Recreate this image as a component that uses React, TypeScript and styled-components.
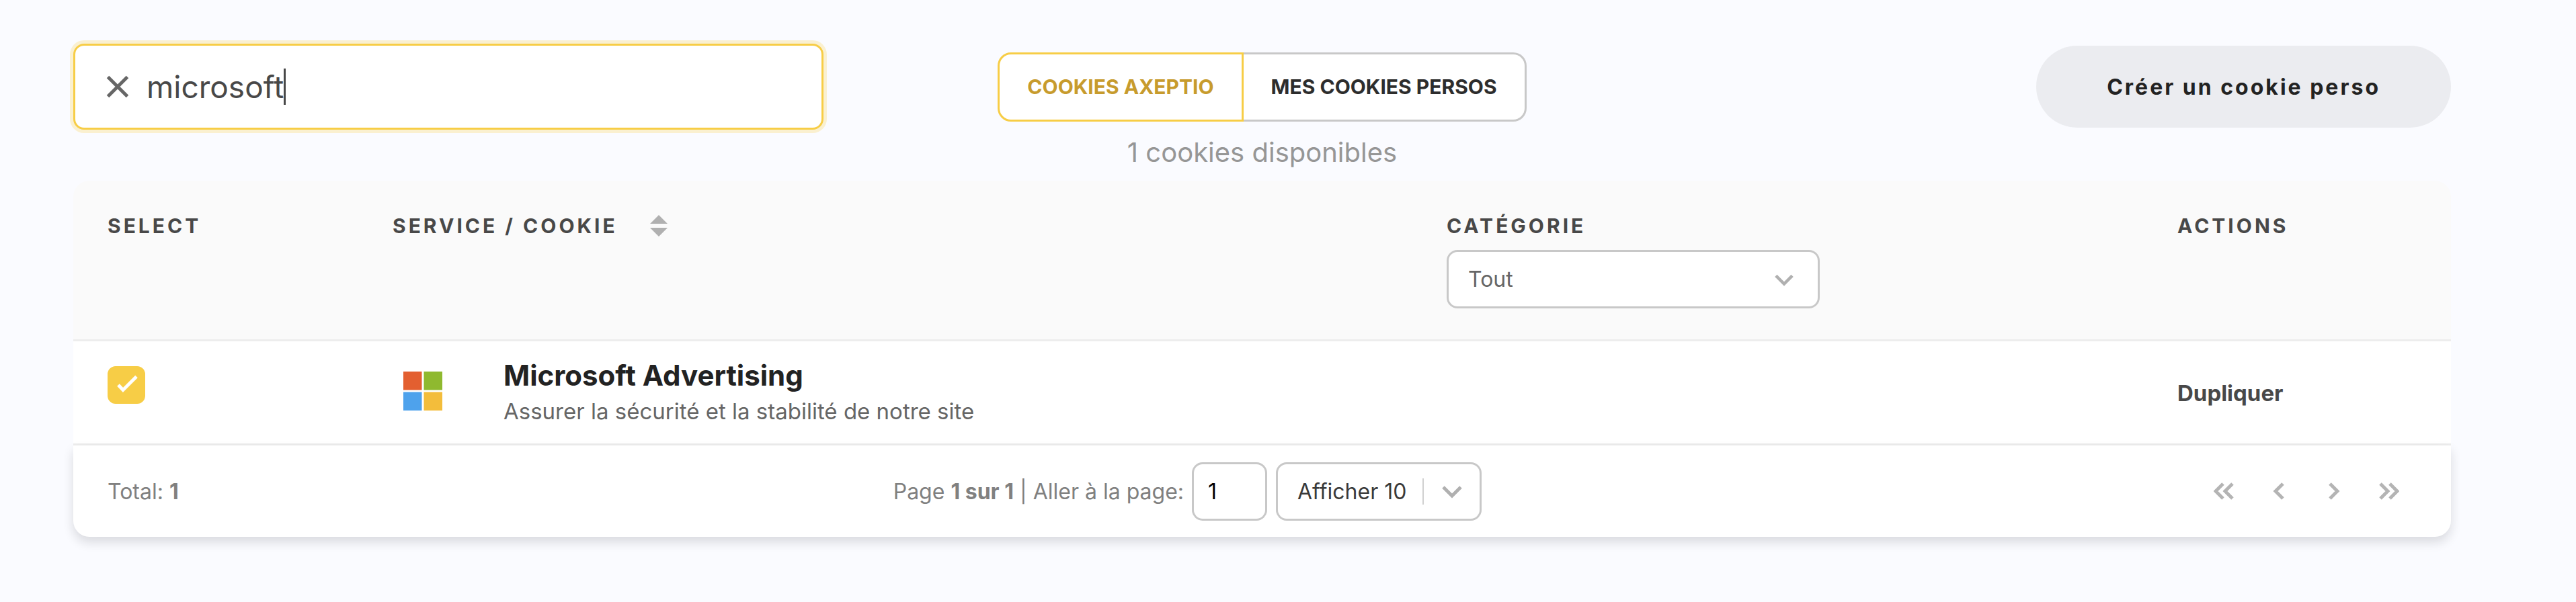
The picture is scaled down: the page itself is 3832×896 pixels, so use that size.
import React, { useState } from "react";
import styled, { createGlobalStyle, css } from "styled-components";

const color = {
  page: "#fafbff",
  yellow: "#f7cd46",
  amber: "#c79b2d",
  border: "#c8c8c8",
  line: "#ededed",
  icon: "#b0b0b0",
  ink: "#222222",
  heading: "#484848",
  body: "#666666",
  muted: "#808080",
};

const GlobalStyle = createGlobalStyle`
  *, *::before, *::after { box-sizing: border-box; }
  body {
    margin: 0;
    background: ${color.page};
    font-family: Inter, "Liberation Sans", sans-serif;
    color: ${color.ink};
  }
  button, input, select { font: inherit; color: inherit; margin: 0; }
  svg { display: block; flex: none; }
`;

const Page = styled.main`
  padding: 65px 186px 97px 109px;
`;

const Toolbar = styled.header`
  display: grid;
  grid-template-columns: 1fr auto 1fr;
  grid-template-rows: 128px auto;
  row-gap: 8px;
  align-items: center;
  margin-bottom: 16px;
`;

const SearchBox = styled.div`
  display: flex;
  align-items: center;
  width: 100%;
  max-width: 1116px;
  height: 128px;
  padding: 0 46px;
  background: #fff;
  border: 3px solid ${color.yellow};
  border-radius: 16px;
  box-shadow: 0 0 0 5px #faf0d0;
`;

const IconButton = styled.button`
  display: flex;
  align-items: center;
  justify-content: center;
  padding: 0;
  border: 0;
  background: none;
  cursor: pointer;
`;

const ClearButton = styled(IconButton)`
  margin-right: 26px;
`;

const SearchInput = styled.input`
  field-sizing: content;
  padding: 0;
  border: 0;
  outline: 0;
  background: none;
  font-size: 46px;
  line-height: 56px;
  color: ${color.heading};
  caret-color: transparent;
`;

const Caret = styled.span`
  width: 3px;
  height: 54px;
  background: ${color.heading};
`;

const Segments = styled.div`
  grid-column: 2;
  display: flex;
`;

const Segment = styled.button<{ $active: boolean }>`
  height: 103px;
  padding: 0 41px;
  background: #fff;
  border: 3px solid ${({ $active }) => ($active ? color.yellow : color.border)};
  color: ${({ $active }) => ($active ? color.amber : "#2d2d2d")};
  font-size: 30px;
  font-weight: 700;
  white-space: nowrap;
  cursor: pointer;

  &:first-child {
    border-radius: 20px 0 0 20px;
  }
  &:last-child {
    border-left: 0;
    border-radius: 0 20px 20px 0;
  }
`;

const Count = styled.p`
  grid-column: 2;
  margin: 0;
  text-align: center;
  font-size: 40px;
  line-height: 52px;
  color: #969696;
`;

const CreateButton = styled.button`
  justify-self: end;
  height: 122px;
  padding: 0 105px;
  border: 0;
  border-radius: 61px;
  background: #ebecf0;
  font-size: 32px;
  font-weight: 700;
  letter-spacing: 3px;
  white-space: nowrap;
  cursor: pointer;
`;

const Table = styled.table`
  width: 100%;
  table-layout: fixed;
  border-collapse: separate;
  border-spacing: 0;
`;

const Col = styled.col<{ $width?: number }>`
  ${({ $width }) => $width && css`width: ${$width}px;`}
`;

const HeadCell = styled.th`
  padding: 47px 51px 46px;
  background: #fafafa;
  border-bottom: 3px solid ${color.line};
  text-align: left;
  vertical-align: top;
  font-size: 30px;
  line-height: 40px;
  font-weight: 700;
  letter-spacing: 4px;
  color: ${color.heading};

  &:first-child { border-top-left-radius: 24px; }
  &:last-child { border-top-right-radius: 24px; }
`;

const SortLabel = styled.span`
  display: flex;
  align-items: center;
  gap: 48px;
`;

const Cell = styled.td<{ $top?: boolean }>`
  padding: ${({ $top }) => ($top ? "37px" : "24px")} 51px 22px;
  background: #fff;
  border-bottom: 3px solid ${color.line};
  vertical-align: ${({ $top }) => ($top ? "top" : "middle")};
`;

const SelectWrap = styled.div<{ $width: number }>`
  position: relative;
  width: ${({ $width }) => $width}px;
`;

const SelectBox = styled.select<{ $tone: string }>`
  appearance: none;
  display: block;
  width: 100%;
  height: 87px;
  padding: 0 29px;
  background: #fff;
  border: 3px solid ${color.border};
  border-radius: 16px;
  font-size: 32px;
  font-weight: 400;
  letter-spacing: normal;
  color: ${({ $tone }) => $tone};
`;

const SelectMark = styled.span<{ $right: number }>`
  position: absolute;
  top: 0;
  bottom: 0;
  right: ${({ $right }) => $right}px;
  display: flex;
  align-items: center;
  gap: 27px;
  pointer-events: none;
`;

const Divider = styled.span`
  width: 2px;
  height: 39px;
  background: #d0d0d0;
`;

const CategoryFilter = styled.div`
  margin-top: 16px;
`;

const CheckLabel = styled.label`
  display: grid;
  width: 56px;
  height: 56px;

  > * { grid-area: 1 / 1; }
  svg { pointer-events: none; }
`;

const CheckInput = styled.input`
  appearance: none;
  width: 56px;
  height: 56px;
  border: 3px solid ${color.border};
  border-radius: 12px;
  background: #fff;

  &:checked {
    border-color: ${color.yellow};
    background: ${color.yellow};
  }
`;

const Service = styled.div`
  display: flex;
`;

const ServiceLogo = styled.div`
  display: flex;
  align-items: center;
  width: 165px;
  height: 100px;
  padding-left: 16px;
`;

const ServiceName = styled.div`
  font-size: 42px;
  line-height: 54px;
  font-weight: 700;
`;

const ServiceText = styled.div`
  font-size: 33px;
  line-height: 52px;
  color: ${color.body};
`;

const DuplicateButton = styled.button`
  padding: 0;
  border: 0;
  background: none;
  font-size: 33px;
  font-weight: 700;
  color: ${color.heading};
  cursor: pointer;
`;

const Footer = styled.footer`
  display: flex;
  align-items: center;
  justify-content: space-between;
  height: 136px;
  padding: 0 51px;
  background: #fff;
  border-radius: 0 0 24px 24px;
  box-shadow: 0 8px 16px rgba(20, 20, 30, 0.14);
  font-size: 32px;
  color: ${color.muted};
  white-space: nowrap;
`;

const Paging = styled.div`
  display: flex;
  align-items: center;
`;

const PageInput = styled.input`
  width: 112px;
  height: 87px;
  margin: 0 13px 0 12px;
  padding: 0 21px;
  background: #fff;
  border: 3px solid ${color.border};
  border-radius: 16px;
  color: #000;
`;

const Pager = styled.nav`
  display: flex;
`;

const PagerButton = styled(IconButton)`
  width: 82px;
  height: 64px;
`;

const CloseIcon = () => (
  <svg width="34" height="34" viewBox="0 0 34 34" fill="none" stroke="#666" strokeWidth="5">
    <path d="M2.5 2.5 31.5 31.5M31.5 2.5 2.5 31.5" />
  </svg>
);

const SortIcon = () => (
  <svg width="26" height="32" viewBox="0 0 26 32" fill={color.icon}>
    <path d="M13 0 26 13H0zM13 32 26 19H0z" />
  </svg>
);

const ChevronDown = ({ width = 30 }: { width?: number }) => (
  <svg width={width} height={width} viewBox="0 0 30 30" fill="none" stroke={color.icon} strokeWidth="5">
    <path d="M2 9 15 22 28 9" />
  </svg>
);

const CheckIcon = () => (
  <svg width="56" height="56" viewBox="0 0 56 56" fill="none" stroke="#fff" strokeWidth="5">
    <path d="M16 28 23 35.500 43 15.500" />
  </svg>
);

const MicrosoftLogo = () => (
  <svg width="58" height="58" viewBox="0 0 58 58" role="img" aria-label="Microsoft">
    <path fill="#e35f30" d="M0 0h27.500v27.500H0z" />
    <path fill="#8fb92f" d="M30.500 0H58v27.500H30.500z" />
    <path fill="#4ea2ec" d="M0 30.500h27.500V58H0z" />
    <path fill="#f3bd3b" d="M30.500 30.500H58V58H30.500z" />
  </svg>
);

const arrows = {
  first: "M14 2 3 13 14 24M28 2 17 13 28 24",
  previous: "M21 2 10 13 21 24",
  next: "M9 2 20 13 9 24",
  last: "M2 2 13 13 2 24M16 2 27 13 16 24",
};

const Arrow = ({ kind }: { kind: keyof typeof arrows }) => (
  <svg width="30" height="26" viewBox="0 0 30 26" fill="none" stroke="#b4b4b4" strokeWidth="5">
    <path d={arrows[kind]} />
  </svg>
);

export default function App() {
  const [query, setQuery] = useState("microsoft");
  const [tab, setTab] = useState("axeptio");
  const [selected, setSelected] = useState(true);
  const [page, setPage] = useState("1");

  return (
    <>
      <GlobalStyle />
      <Page>
        <Toolbar>
          <SearchBox>
            <ClearButton type="button" aria-label="Effacer" onClick={() => setQuery("")}>
              <CloseIcon />
            </ClearButton>
            <SearchInput
              aria-label="Rechercher un cookie"
              value={query}
              onChange={(e) => setQuery(e.target.value)}
            />
            <Caret />
          </SearchBox>
          <Segments>
            <Segment
              type="button"
              $active={tab === "axeptio"}
              aria-pressed={tab === "axeptio"}
              onClick={() => setTab("axeptio")}
            >
              COOKIES AXEPTIO
            </Segment>
            <Segment
              type="button"
              $active={tab === "persos"}
              aria-pressed={tab === "persos"}
              onClick={() => setTab("persos")}
            >
              MES COOKIES PERSOS
            </Segment>
          </Segments>
          <CreateButton type="button">Créer un cookie perso</CreateButton>
          <Count>1 cookies disponibles</Count>
        </Toolbar>

        <Table>
          <colgroup>
            <Col $width={424} />
            <Col />
            <Col $width={1087} />
            <Col $width={458} />
          </colgroup>
          <thead>
            <tr>
              <HeadCell scope="col">SELECT</HeadCell>
              <HeadCell scope="col">
                <SortLabel>
                  SERVICE / COOKIE
                  <IconButton type="button" aria-label="Trier">
                    <SortIcon />
                  </IconButton>
                </SortLabel>
              </HeadCell>
              <HeadCell scope="col">
                <label htmlFor="category">CATÉGORIE</label>
                <CategoryFilter>
                  <SelectWrap $width={555}>
                    <SelectBox id="category" $tone={color.body}>
                      <option>Tout</option>
                    </SelectBox>
                    <SelectMark $right={39}>
                      <ChevronDown width={28} />
                    </SelectMark>
                  </SelectWrap>
                </CategoryFilter>
              </HeadCell>
              <HeadCell scope="col">ACTIONS</HeadCell>
            </tr>
          </thead>
          <tbody>
            <tr>
              <Cell $top>
                <CheckLabel>
                  <CheckInput
                    type="checkbox"
                    aria-label="Microsoft Advertising"
                    checked={selected}
                    onChange={(e) => setSelected(e.target.checked)}
                  />
                  <CheckIcon />
                </CheckLabel>
              </Cell>
              <Cell>
                <Service>
                  <ServiceLogo>
                    <MicrosoftLogo />
                  </ServiceLogo>
                  <div>
                    <ServiceName>Microsoft Advertising</ServiceName>
                    <ServiceText>Assurer la sécurité et la stabilité de notre site</ServiceText>
                  </div>
                </Service>
              </Cell>
              <Cell />
              <Cell>
                <DuplicateButton type="button">Dupliquer</DuplicateButton>
              </Cell>
            </tr>
          </tbody>
        </Table>

        <Footer>
          <span>
            Total: <b>1</b>
          </span>
          <Paging>
            <label htmlFor="page">
              Page <b>1 sur 1</b> | Aller à la page:
            </label>
            <PageInput id="page" value={page} onChange={(e) => setPage(e.target.value)} />
            <SelectWrap $width={306}>
              <SelectBox aria-label="Lignes par page" $tone="#3a3a3a">
                <option>Afficher 10</option>
              </SelectBox>
              <SelectMark $right={29}>
                <Divider />
                <ChevronDown />
              </SelectMark>
            </SelectWrap>
          </Paging>
          <Pager aria-label="Pagination">
            <PagerButton type="button" aria-label="Première page">
              <Arrow kind="first" />
            </PagerButton>
            <PagerButton type="button" aria-label="Page précédente">
              <Arrow kind="previous" />
            </PagerButton>
            <PagerButton type="button" aria-label="Page suivante">
              <Arrow kind="next" />
            </PagerButton>
            <PagerButton type="button" aria-label="Dernière page">
              <Arrow kind="last" />
            </PagerButton>
          </Pager>
        </Footer>
      </Page>
    </>
  );
}
